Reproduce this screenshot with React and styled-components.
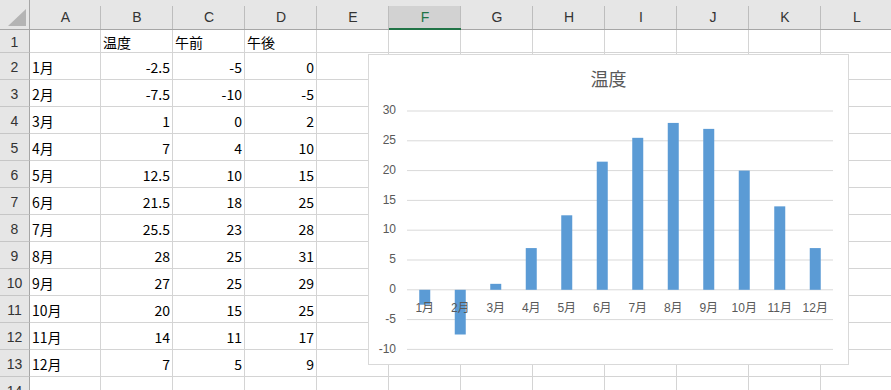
import React from "react";
import styled, { createGlobalStyle } from "styled-components";

const COLS = ["A", "B", "C", "D", "E", "F", "G", "H", "I", "J", "K", "L"];
const SELECTED_COL = "F";

const rows = [
    ["1月", -2.5, -5, 0],
    ["2月", -7.5, -10, -5],
    ["3月", 1, 0, 2],
    ["4月", 7, 4, 10],
    ["5月", 12.5, 10, 15],
    ["6月", 21.5, 18, 25],
    ["7月", 25.5, 23, 28],
    ["8月", 28, 25, 31],
    ["9月", 27, 25, 29],
    ["10月", 20, 15, 25],
    ["11月", 14, 11, 17],
    ["12月", 7, 5, 9],
];

// chart geometry (svg coords)
const PLOT_LEFT = 38;
const PLOT_RIGHT = 464;
const Y_ZERO = 197.8;
const PX_PER_UNIT = 5.96;
const TICKS = [30, 25, 20, 15, 10, 5, 0, -5, -10];
const BAR_W = 11;

const GlobalStyle = createGlobalStyle`
    html, body {
        margin: 0;
        padding: 0;
        background: #fff;
        overflow: hidden;
    }
`;

const Page = styled.div`
    position: relative;
    width: 891px;
    height: 390px;
    overflow: hidden;
`;

const Sheet = styled.div`
    display: grid;
    grid-template-columns: 30px 71px repeat(11, 72px);
    grid-template-rows: 30px 23px repeat(13, 27px);
    font-family: "Noto Sans CJK JP", "Liberation Sans", sans-serif;
    font-size: 14px;
    color: #000;
`;

const Corner = styled.div`
    box-sizing: border-box;
    background: #e6e6e6;
    border-right: 1px solid #a6a6a6;
    border-bottom: 1px solid #a6a6a6;
    display: flex;
`;

const ColHead = styled.div`
    box-sizing: border-box;
    padding-top: 6px;
    line-height: 22px;
    text-align: center;
    font-family: "Liberation Sans", "Noto Sans", sans-serif;
    font-size: 14px;
    color: ${(p) => (p.$selected ? "#217346" : "#333")};
    background: ${(p) =>
        p.$selected
            ? "linear-gradient(#bdbdbd, #bdbdbd) right 6px / 1px calc(100% - 6px) no-repeat, linear-gradient(to bottom, #e6e6e6 6px, #d2d2d2 6px)"
            : "linear-gradient(#bdbdbd, #bdbdbd) right 6px / 1px calc(100% - 6px) no-repeat, #e6e6e6"};
    border-bottom: ${(p) => (p.$selected ? "2px solid #217346" : "1px solid #a6a6a6")};
`;

const RowHead = styled.div`
    box-sizing: border-box;
    background: #e6e6e6;
    border-right: 1px solid #a6a6a6;
    border-bottom: 1px solid #c6c6c6;
    display: flex;
    align-items: center;
    justify-content: center;
    padding-top: 2px;
    font-family: "Liberation Sans", "Noto Sans", sans-serif;
    font-size: 14px;
    color: #333;
`;

const Cell = styled.div`
    box-sizing: border-box;
    border-right: 1px solid #d4d4d4;
    border-bottom: 1px solid #d4d4d4;
    display: flex;
    align-items: center;
    justify-content: ${(p) => (p.$num ? "flex-end" : "flex-start")};
    padding: 1px 2px 0 2px;
    white-space: nowrap;
    overflow: hidden;
`;

const Chart = styled.div`
    position: absolute;
    left: 368px;
    top: 54px;
    width: 481px;
    height: 311px;
    box-sizing: border-box;
    border: 1px solid #d9d9d9;
    background: #fff;
    display: flex;
    flex-direction: column;
`;

const ChartTitle = styled.div`
    padding-top: 9px;
    height: 28px;
    line-height: 28px;
    text-align: center;
    font-family: "Noto Sans CJK JP", sans-serif;
    font-size: 18px;
    color: #595959;
`;

const Plot = styled.svg`
    display: block;
    font-family: "Liberation Sans", "Noto Sans CJK JP", sans-serif;
    font-size: 12px;
    fill: #595959;
`;

function TempChart({ data }) {
    const step = (PLOT_RIGHT - PLOT_LEFT) / data.length;
    const yOf = (v) => Y_ZERO - v * PX_PER_UNIT;

    return (
        <Chart>
            <ChartTitle>温度</ChartTitle>
            <Plot width="479" height="272" viewBox="0 0 479 272">
                {TICKS.map((t) => (
                    <g key={t}>
                        <line x1={PLOT_LEFT} x2={PLOT_RIGHT} y1={yOf(t)} y2={yOf(t)} stroke="#d9d9d9" strokeWidth="1" />
                        <text x="27" y={yOf(t)} textAnchor="end" dominantBaseline="middle">{t}</text>
                    </g>
                ))}
                {data.map(([label, temp], i) => {
                    const cx = PLOT_LEFT + step * (i + 0.5);
                    const top = Math.min(yOf(temp), Y_ZERO);
                    const h = Math.abs(temp * PX_PER_UNIT);
                    return (
                        <g key={label}>
                            <rect x={cx - BAR_W / 2} y={top} width={BAR_W} height={h} fill="#5b9bd5" />
                            <text x={cx} y={Y_ZERO + 19} textAnchor="middle" dominantBaseline="middle">{label}</text>
                        </g>
                    );
                })}
            </Plot>
        </Chart>
    );
}

const CornerMark = () => (
    <svg width="29" height="29" viewBox="0 0 29 29">
        <polygon points="8,26 26,26 26,9" fill="#b4b4b4" />
    </svg>
);

export default function App() {
    const body = [["", "温度", "午前", "午後"], ...rows];

    return (
        <Page>
            <GlobalStyle />
            <Sheet>
                <Corner><CornerMark /></Corner>
                {COLS.map((c) => (
                    <ColHead key={c} $selected={c === SELECTED_COL}>{c}</ColHead>
                ))}
                {Array.from({ length: 14 }, (_, r) => {
                    const rowData = body[r] || [];
                    return (
                        <React.Fragment key={r}>
                            <RowHead>{r + 1}</RowHead>
                            {COLS.map((c, ci) => {
                                const v = rowData[ci];
                                const isNum = typeof v === "number";
                                return (
                                    <Cell key={c} $num={isNum}>{v === undefined ? "" : v}</Cell>
                                );
                            })}
                        </React.Fragment>
                    );
                })}
            </Sheet>
            <TempChart data={rows} />
        </Page>
    );
}
